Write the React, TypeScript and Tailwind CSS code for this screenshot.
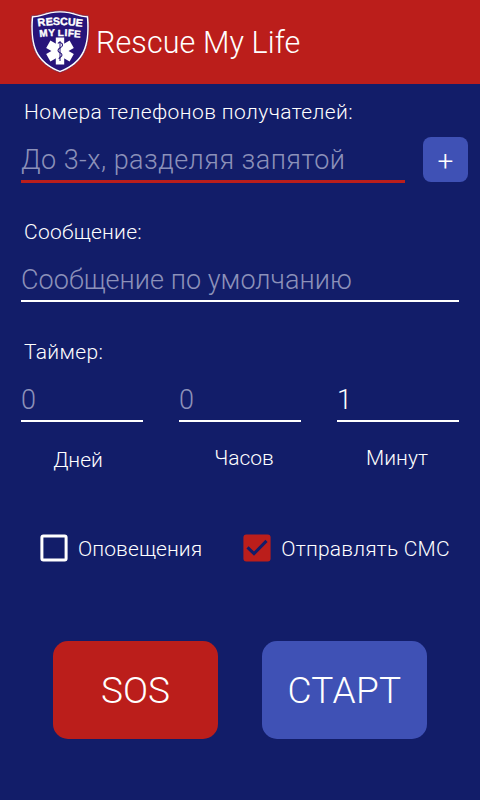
import { useState } from "react";

function Logo() {
  return (
    <svg className="h-[64px] w-[60px] shrink-0" viewBox="0 0 60 64" role="img" aria-label="Rescue My Life">
      <path
        d="M30 .8C23 1 18 2 13 3.800Q7 5.700 1.500 5.800C1 10 .8 15 1 20C1.200 31 3.500 41 9 48C14 54.500 21 59.500 30 62.600C39 59.500 46 54.500 51 48C56.500 41 58.800 31 59 20C59.200 15 59 10 58.500 5.800Q53 5.700 47 3.800C42 2 37 1 30 .8Z"
        fill="#fff"
        stroke="#6b1740"
        strokeWidth=".7"
      />
      <path
        d="M30 2.600C23.500 2.800 18.500 3.700 14 5.300Q8.500 7.300 3.200 7.500C2.800 12 2.700 16 2.800 20C3 30.500 5.200 40 10.400 46.800C15 53 21.500 57.500 30 60.700C38.500 57.500 45 53 49.600 46.800C54.800 40 57 30.500 57.200 20C57.300 16 57.200 12 56.800 7.500Q51.500 7.300 46 5.300C41.500 3.700 36.500 2.800 30 2.600Z"
        fill="#27147a"
      />
      <g fill="#fff" stroke="#fff" strokeWidth=".4" className="font-['Liberation_Sans',sans-serif] font-bold">
        <text
          fontSize="10.600"
          x="8 15.900 22.900 30 37.700 45.300"
          y="16.300 15.500 15 15 15.200 16"
          rotate="-7 -4 -1 1 4 7"
        >
          RESCUE
        </text>
        <text
          fontSize="9.800"
          x="9.800 18.400 26 27.800 34.400 37.700 43.700"
          y="27 26.300 26 26 26 26.300 26.900"
          rotate="-6 -3 0 0 2 4 6"
        >
          MY LIFE
        </text>
      </g>
      <g fill="#fff" transform="translate(30 41)">
        <rect x="-4.200" y="-13.500" width="8.400" height="27" />
        <rect x="-4.200" y="-13.500" width="8.400" height="27" transform="rotate(60)" />
        <rect x="-4.200" y="-13.500" width="8.400" height="27" transform="rotate(-60)" />
      </g>
      <path d="M30 31V51" stroke="#27147a" strokeWidth="1" />
      <path
        d="M28 33.500C29 31.500 33 33 32.500 35.500C32 38 28 37.500 28 40.500C28 43 32 42.500 32 45C32 47 29 47 29 49"
        fill="none"
        stroke="#27147a"
        strokeWidth="1.100"
      />
    </svg>
  );
}

function Label({ children, spacing }: { children: string; spacing: string }) {
  return <div className={`h-[28px] pl-[24px] text-[21px] leading-[28px] ${spacing}`}>{children}</div>;
}

const field =
  "block min-w-0 bg-transparent p-0 text-[27px] outline-none placeholder:text-[#8c91b9] placeholder:opacity-100";

function TimeField({ label, value, placeholder, shift }: { label: string; value?: string; placeholder?: string; shift: string }) {
  return (
    <div className="w-[122px]">
      <input
        className={`${field} h-[42px] w-full border-b-2 border-white`}
        defaultValue={value}
        placeholder={placeholder}
        aria-label={label}
      />
      <div className={`text-center text-[21px] leading-[28px] ${shift}`}>{label}</div>
    </div>
  );
}

function Check({ label, initial, spacing }: { label: string; initial: boolean; spacing: string }) {
  const [on, setOn] = useState(initial);
  return (
    <button className="flex h-[28px] items-center gap-[10px] whitespace-nowrap" onClick={() => setOn(!on)}>
      <svg className="h-[28px] w-[28px] shrink-0" viewBox="0 0 28 28">
        {on ? (
          <>
            <rect x=".4" y=".4" width="27.200" height="27.200" rx="3" fill="#bb1e1b" />
            <path d="M4.500 13.300L11 19.600L23.500 6.900" fill="none" stroke="#121d69" strokeWidth="3" />
          </>
        ) : (
          <rect x="1.900" y="1.900" width="24.200" height="24.200" rx="1.500" fill="none" stroke="#fff" strokeWidth="3" />
        )}
      </svg>
      <span className={`pt-[2px] text-[21px] leading-[28px] ${spacing}`}>{label}</span>
    </button>
  );
}

export default function App() {
  return (
    <div className="h-[800px] w-[480px] overflow-hidden bg-[#121d69] font-[Roboto,sans-serif] font-light text-white">
      <header className="flex h-[84px] items-center bg-[#bb1e1b] pl-[30px]">
        <Logo />
        <h1 className="pt-[2px] pl-[6px] text-[30.5px] leading-[36px] tracking-[0.1px]">Rescue My Life</h1>
      </header>

      <section className="h-[120px] pt-[14px]">
        <Label spacing="tracking-[0.4px]">Номера телефонов получателей:</Label>
        <div className="flex pt-[11px] pl-[21px]">
          <input
            className={`${field} h-[46px] w-[384px] border-b-3 border-[#bb1e1b] pt-[2px] tracking-[0.47px]`}
            placeholder="До 3-х, разделяя запятой"
            aria-label="Номера телефонов получателей"
          />
          <button className="ml-[18px] h-[45px] w-[45px] rounded-[8px] bg-[#3f51b5] pt-[4px] text-[28px] leading-[41px]">
            +
          </button>
        </div>
      </section>

      <section className="h-[120px] pt-[14px]">
        <Label spacing="tracking-[0.27px]">Сообщение:</Label>
        <div className="pt-[14px] pl-[21px]">
          <input
            className={`${field} h-[42px] w-[438px] border-b-2 border-white tracking-[0.05px]`}
            placeholder="Сообщение по умолчанию"
            aria-label="Сообщение"
          />
        </div>
      </section>

      <section className="h-[210px] pt-[14px]">
        <Label spacing="tracking-[0.35px]">Таймер:</Label>
        <div className="flex gap-[36px] pt-[14px] pl-[21px]">
          <TimeField label="Дней" placeholder="0" shift="pt-[24px] pr-[8px]" />
          <TimeField label="Часов" placeholder="0" shift="pt-[22px] pl-[8px]" />
          <TimeField label="Минут" value="1" shift="pt-[22px] pr-[2px]" />
        </div>
      </section>

      <div className="flex gap-[41px] pl-[40px]">
        <Check label="Оповещения" initial={false} spacing="tracking-[0.1px]" />
        <Check label="Отправлять СМС" initial={true} spacing="tracking-[0.2px]" />
      </div>

      <div className="flex gap-[44px] pt-[79px] pl-[53px]">
        <button className="h-[98px] w-[165px] rounded-[15px] bg-[#bb1e1b] pt-[2px] text-[37px]">SOS</button>
        <button className="h-[98px] w-[165px] rounded-[15px] bg-[#3f51b5] pt-[2px] text-[37px] tracking-[0.4px]">СТАРТ</button>
      </div>
    </div>
  );
}
